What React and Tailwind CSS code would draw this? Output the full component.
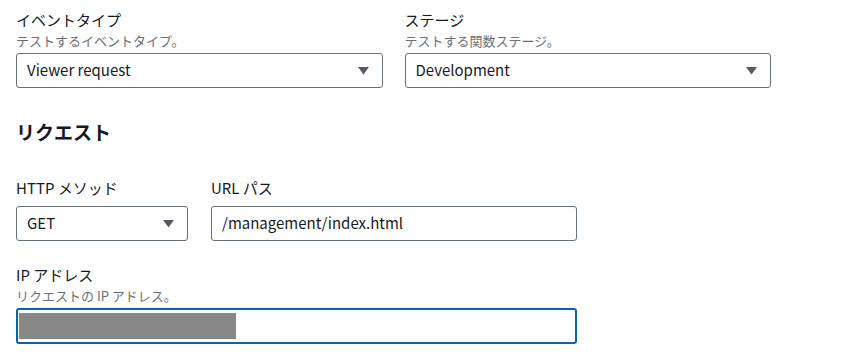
import React from "react";

const font = { fontFamily: '"Noto Sans CJK JP", sans-serif' };

function Caret() {
  return (
    <svg width="11" height="8" viewBox="0 0 11 8" className="shrink-0">
      <path d="M0 0 H11 L5.5 7.5 Z" fill="#545b64" />
    </svg>
  );
}

function Select({ value, className }) {
  return (
    <div
      className={
        "flex h-[35px] items-center justify-between rounded-[3px] border border-[#687078] bg-white pl-[10px] pr-[13px] " +
        className
      }
    >
      <span className="pb-[2px] text-[15px] leading-[20px] text-[#16191f]">{value}</span>
      <Caret />
    </div>
  );
}

function Label({ children }) {
  return <div className="text-[15px] leading-[20px] text-[#16191f]">{children}</div>;
}

function Desc({ children }) {
  return <div className="mt-[2px] text-[13px] leading-[17px] text-[#687078]">{children}</div>;
}

export default function App() {
  return (
    <div className="min-h-[360px] w-[853px] bg-white px-4 pt-[10px]" style={font}>
      <div className="grid w-[755px] grid-cols-2 gap-[22px]">
        <div>
          <Label>イベントタイプ</Label>
          <Desc>テストするイベントタイプ。</Desc>
          <Select value="Viewer request" className="mt-[4px]" />
        </div>
        <div>
          <Label>ステージ</Label>
          <Desc>テストする関数ステージ。</Desc>
          <Select value="Development" className="mt-[4px]" />
        </div>
      </div>

      <h2 className="mt-[32px] text-[19px] font-bold leading-[24px] text-[#16191f]">リクエスト</h2>

      <div className="mt-[34px] flex gap-[23px]">
        <div className="w-[172px]">
          <Label>HTTP メソッド</Label>
          <Select value="GET" className="mt-[8px]" />
        </div>
        <div className="w-[366px]">
          <Label>URL パス</Label>
          <div className="mt-[8px] flex h-[35px] items-center rounded-[3px] border border-[#687078] bg-white pl-[10px]">
            <span className="pb-[2px] text-[15px] leading-[20px] text-[#16191f]">/management/index.html</span>
          </div>
        </div>
      </div>

      <div className="mt-[24px] w-[561px]">
        <Label>IP アドレス</Label>
        <Desc>リクエストの IP アドレス。</Desc>
        <div className="mt-[4px] flex h-[36px] items-center rounded-[3px] border-2 border-[#0a63b0] bg-white pl-[1px]">
          <div className="h-[26px] w-[217px] bg-[#888888]" />
        </div>
      </div>
    </div>
  );
}
